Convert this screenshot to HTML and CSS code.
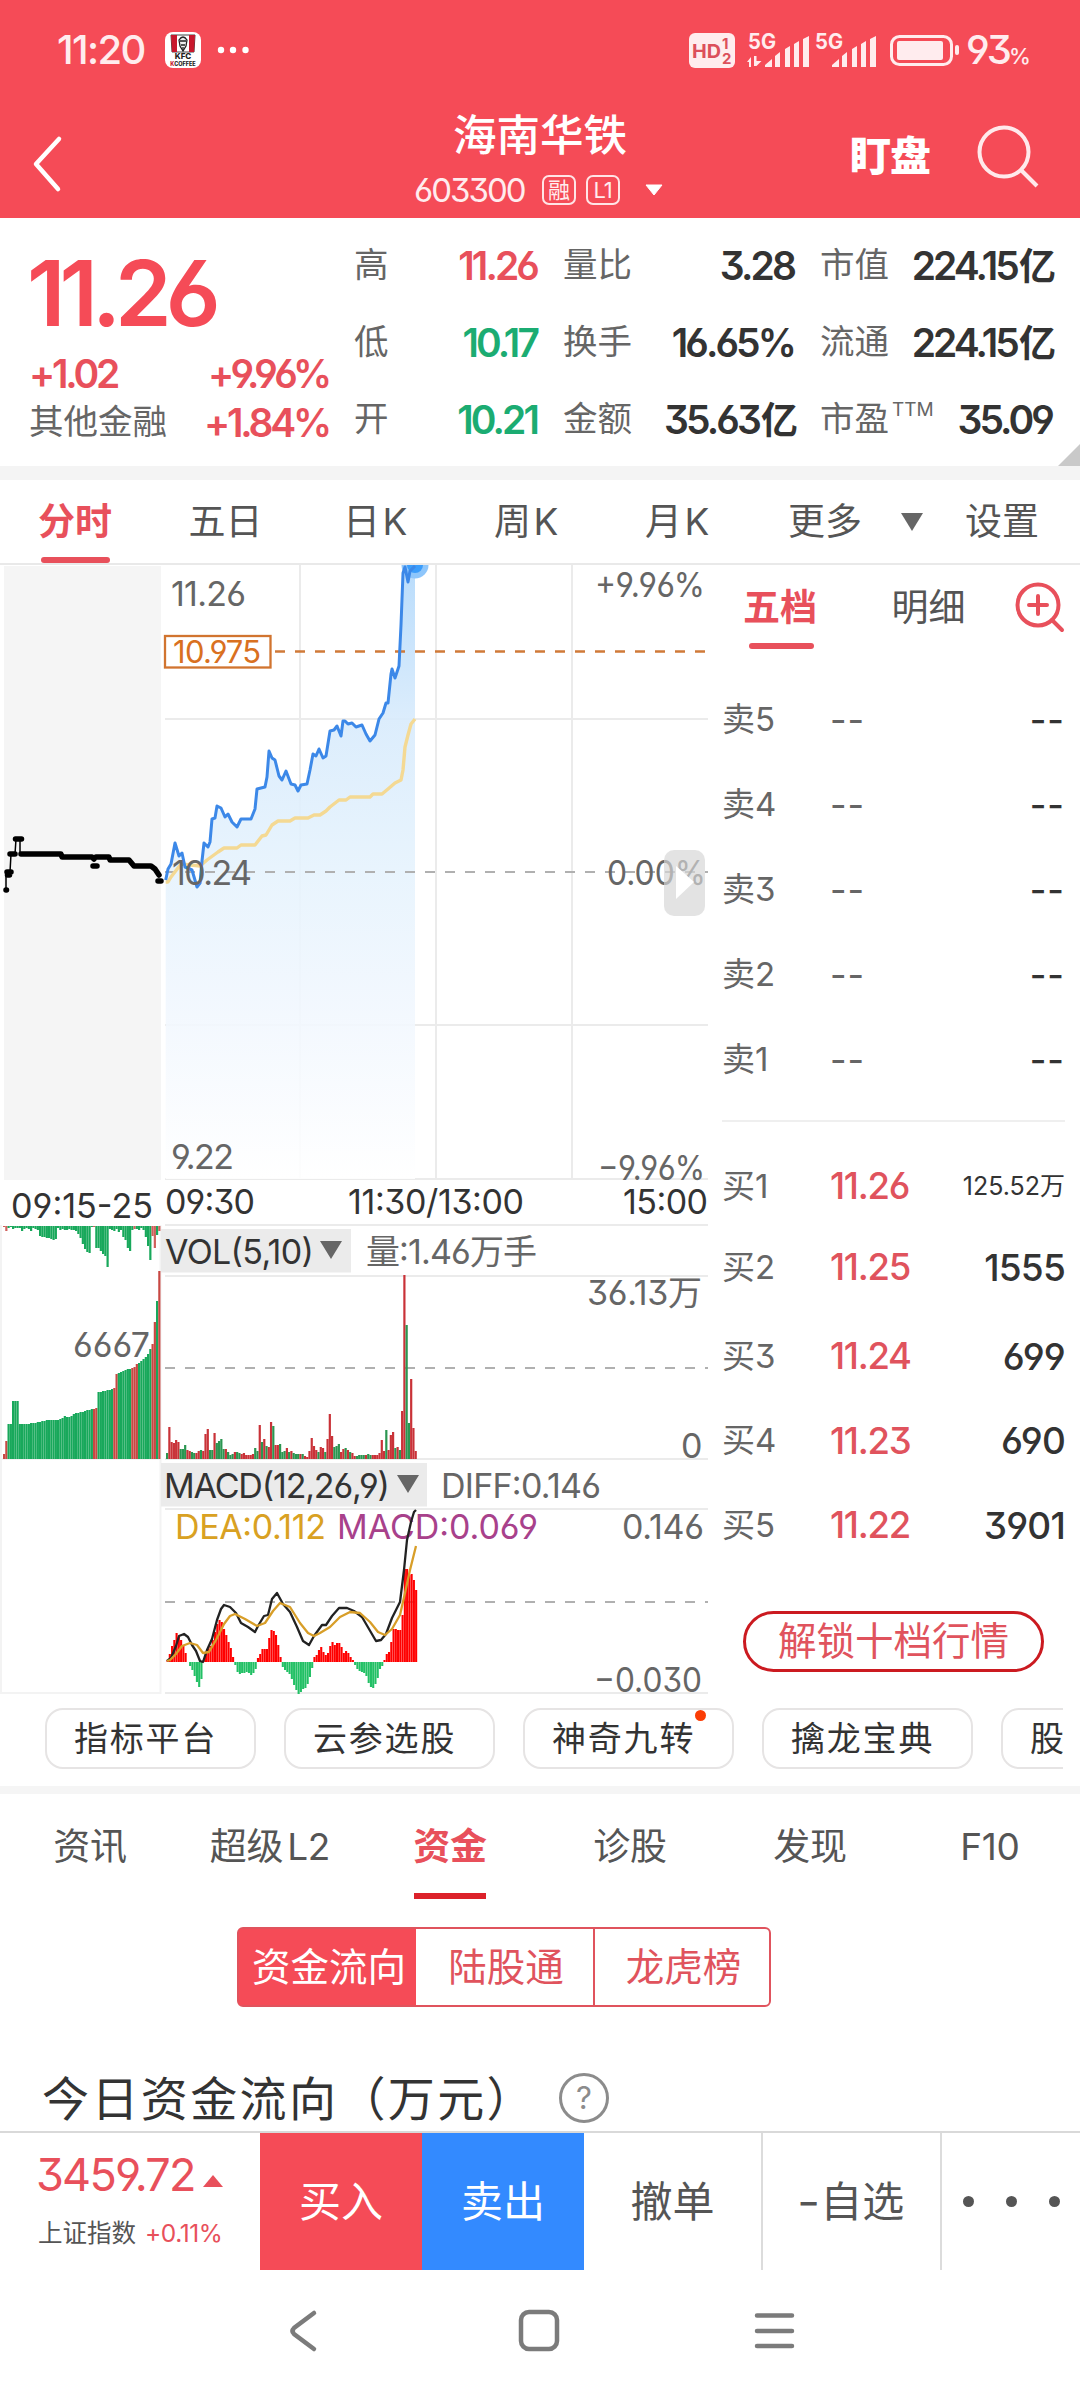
FILE: index.html
```html
<!DOCTYPE html>
<html lang="zh-CN">
<head>
  <meta charset="utf-8">
  <title>海南华铁 603300</title>
  <meta name="viewport" content="width=device-width, initial-scale=1">
  <link rel="stylesheet" href="styles.css">
</head>
<body>
  <header class="header">
    <div class="status">
      <span class="clock">11:20</span>
      <svg class="app-icon" width="36" height="36" viewBox="0 0 36 36">
        <rect width="36" height="36" rx="8" fill="#fff"/>
        <path d="M6 3h24l-1 17H7z" fill="#fff" stroke="#444" stroke-width="1"/>
        <path d="M6 3h6v17H7zM24 3h6l-1 17h-5z" fill="#c8172c"/>
        <path d="M14 8q4-6 8 0l-1 6-3 5-3-5z" fill="#eee" stroke="#222" stroke-width="1.3"/>
        <path d="M15 9h6M16 13h4M18 15v4" stroke="#222" stroke-width="1.3"/>
        <text x="18" y="27" class="kfc" font-size="8">KFC</text>
        <text x="18" y="33.500" class="kfc" font-size="5.500"><tspan fill="#c8172c">K</tspan>COFFEE</text>
      </svg>
      <svg class="more" width="34" height="8" viewBox="0 0 34 8" fill="#fff"><circle cx="4" cy="4" r="3.200"/><circle cx="16" cy="4" r="3.200"/><circle cx="28.500" cy="4" r="3.200"/></svg>
      <svg class="phone" width="272" height="40" viewBox="688 30 272 40" fill="#ffecee">
        <rect x="689" y="33" width="46" height="35" rx="6"/>
        <g class="hd" fill="#dc4f5b"><text x="692" y="58" font-size="19" textLength="29" lengthAdjust="spacingAndGlyphs">HD</text><text x="722" y="49" font-size="15">1</text><text x="722" y="64" font-size="15">2</text></g>
        <text class="hd" x="748" y="49" font-size="21" textLength="28" lengthAdjust="spacingAndGlyphs">5G</text>
        <text class="hd" x="815" y="49" font-size="21" textLength="28" lengthAdjust="spacingAndGlyphs">5G</text>
        <path d="M747 62l4-5v10h-2v-5zM754 56h2.500v5h5l-5 5h-2.500zM765 65l7-6v8h-7zM775 56l5-4v15h-5zM785 49l5-3v21h-5zM794 44l5-3v26h-5zM803 39l6-3v31h-6z"/>
        <path d="M832 65l7-6v8h-7zM842 56l5-4v15h-5zM852 49l5-3v21h-5zM861 44l5-3v26h-5zM870 39l6-3v31h-6z"/>
        <rect x="891.500" y="36.500" width="60" height="28" rx="8" fill="none" stroke="#ffecee" stroke-width="3"/>
        <rect x="897" y="41" width="46" height="19" rx="2"/>
        <rect x="955" y="45" width="4" height="10" rx="2"/>
      </svg>
      <span class="percent">93<small>%</small></span>
    </div>
    <div class="titlebar">
      <svg class="back" width="40" height="60" viewBox="0 0 40 60"><path d="M31 5 8 30l22 25" fill="none" stroke="#fff" stroke-width="4.500" stroke-linecap="round" stroke-linejoin="round"/></svg>
      <div class="stock">
        <h1>海南华铁</h1>
        <div class="code">603300 <span class="badge">融</span><span class="badge">L1</span><svg width="18" height="12" viewBox="0 0 18 12"><path d="M1 1h16L9 11z" fill="#fff" stroke="#fff" stroke-linejoin="round"/></svg></div>
      </div>
      <span class="watch">盯盘</span>
      <svg class="search" width="64" height="64" viewBox="0 0 64 64" fill="none" stroke="#ffe9eb" stroke-width="4"><circle cx="28" cy="27" r="24.500"/><path d="M44 44l17 17"/></svg>
    </div>
  </header>

  <section class="quote">
    <div class="price">
      <div class="now">11.26</div>
      <div class="pair chg"><b>+1.02</b><b>+9.96%</b></div>
      <div class="pair sector"><span>其他金融</span><b>+1.84%</b></div>
    </div>
    <dl class="stats c1">
      <div><dt>高</dt><dd class="up">11.26</dd></div>
      <div><dt>低</dt><dd class="down">10.17</dd></div>
      <div><dt>开</dt><dd class="down">10.21</dd></div>
    </dl>
    <dl class="stats c2">
      <div><dt>量比</dt><dd>3.28</dd></div>
      <div><dt>换手</dt><dd>16.65%</dd></div>
      <div><dt>金额</dt><dd>35.63<i>亿</i></dd></div>
    </dl>
    <dl class="stats c3">
      <div><dt>市值</dt><dd>224.15<i>亿</i></dd></div>
      <div><dt>流通</dt><dd>224.15<i>亿</i></dd></div>
      <div><dt>市盈<sup>TTM</sup></dt><dd>35.09</dd></div>
    </dl>
    <i class="corner"></i>
  </section>

  <nav class="periods">
    <span class="active">分时</span><span>五日</span><span class="k">日K</span><span class="k">周K</span><span class="k">月K</span><span class="wide">更多<svg width="22" height="18" viewBox="0 0 22 18"><path d="M0 0h22L11 18z" fill="#666"/></svg></span><span class="wide">设置</span>
  </nav>

  <main class="market">
    <svg class="chart" width="710" height="1135" viewBox="0 565 710 1135">
      <defs>
        <linearGradient id="fill" x1="0" y1="565" x2="0" y2="1179" gradientUnits="userSpaceOnUse">
          <stop offset="0" stop-color="#b1d8fb"/><stop offset=".25" stop-color="#d8ebfc"/><stop offset=".5" stop-color="#e6f3fd"/><stop offset=".72" stop-color="#f1f7fe"/><stop offset="1" stop-color="#fff"/>
        </linearGradient>
      </defs>
      <rect x="4" y="566" width="157" height="614" fill="#f5f5f5"/>
      <g stroke="#ebebeb" stroke-width="2">
        <path d="M165 719H708M165 1025H708M165 1179H708M165 1225H708M165 1276H708M165 1459H708M165 1509H708M165 1693H708M300 565V1179M436 565V1179M572 565V1179"/>
        <path d="M1 1225V1693H160.500V1225M0 1459H160" stroke="#f3f3f3" fill="none"/>
      </g>
      <path id="area" fill="url(#fill)" fill-opacity=".9"/>
      <g stroke="#b0b0b0" stroke-width="2.200" stroke-dasharray="10 10"><path d="M165 872H708M165 1368H708M165 1602H708"/></g>
      <path d="M275 651.500H706" stroke="#d07a38" stroke-width="2.500" stroke-dasharray="10 10"/>
      <circle cx="415" cy="565" r="13.500" fill="#8ec6fb"/>
      <circle cx="415" cy="565" r="8" fill="#3b9dfb"/>
      <path id="avg" fill="none" stroke="#f4d993" stroke-width="3.400" stroke-linejoin="round"/>
      <path id="line" fill="none" stroke="#3c88e8" stroke-width="3" stroke-linejoin="round"/>
      <g fill="none" stroke="#000" stroke-linecap="round" stroke-linejoin="round">
        <path d="M6 890V873L10 872 11 854H15L16 839H20V854" stroke-width="1.500"/>
        <path d="M6 890h.5M7 872H11M7.500 875h2M10 854H15M15.500 839H21.500M21 854H61L62 857H92L94 859M93 866H97M96 857H109L110 860H129L134 866H151L155 869 159 875M158 881H161" stroke-width="5.500"/>
      </g>

      <g id="auction"></g>
      <g id="volume"></g>
      <rect x="161" y="1229" width="190" height="43.500" fill="#ebebeb"/>
      <rect x="161" y="1463" width="266" height="43.500" fill="#ebebeb"/>
      <path d="M320 1241h22l-11 18zM397 1475h22l-11 18z" fill="#666"/>

      <rect x="165" y="636" width="105.500" height="31.500" fill="#fff" stroke="#d1742f" stroke-width="2.300"/>
      <g class="axis">
        <text x="171" y="606" textLength="75">11.26</text>
        <text x="173" y="663" textLength="88" class="cost">10.975</text>
        <text x="172" y="885" textLength="80">10.24</text>
        <text x="171" y="1169" textLength="63">9.22</text>
        <text x="595" y="597" textLength="110" lengthAdjust="spacingAndGlyphs">+9.96%</text>
        <text x="607" y="885" textLength="99" lengthAdjust="spacingAndGlyphs">0.00%</text>
        <text x="598" y="1180" textLength="107" lengthAdjust="spacingAndGlyphs">−9.96%</text>
        <text x="73" y="1357" textLength="77" lengthAdjust="spacingAndGlyphs">6667</text>
        <text x="366" y="1264" textLength="171">量:1.46万手</text>
        <text x="587" y="1305" textLength="115">36.13万</text>
        <text x="681" y="1458">0</text>
        <text x="441" y="1498" textLength="160">DIFF:0.146</text>
        <text x="622" y="1539" textLength="82">0.146</text>
        <text x="594" y="1692" textLength="108" lengthAdjust="spacingAndGlyphs">−0.030</text>
      </g>
      <g class="axis dark">
        <text x="11" y="1218" textLength="142" lengthAdjust="spacingAndGlyphs">09:15-25</text>
        <text x="165" y="1214" textLength="90">09:30</text>
        <text x="348" y="1214" textLength="176">11:30/13:00</text>
        <text x="623" y="1214" textLength="85">15:00</text>
        <text x="165" y="1264" textLength="149">VOL(5,10)</text>
        <text x="164" y="1498" textLength="226">MACD(12,26,9)</text>
      </g>
      <g class="axis">
        <text x="175" y="1539" textLength="151" class="dea">DEA:0.112</text>
        <text x="337" y="1539" textLength="201" class="macd">MACD:0.069</text>
      </g>
      <g id="macd"></g>
      <path id="diff" fill="none" stroke="#222" stroke-width="2.300" stroke-linejoin="round"/>
      <path id="dea" fill="none" stroke="#d89e28" stroke-width="2.300" stroke-linejoin="round"/>
      <rect x="664" y="850" width="41" height="66" rx="10" fill="#d6d6d6" fill-opacity=".68"/>
      <path d="M676 866v33l18-17z" fill="#fff"/>
    </svg>

    <aside class="book">
      <div class="book-tabs">
        <span class="active">五档</span><span>明细</span>
        <svg width="52" height="52" viewBox="0 0 52 52" fill="none" stroke="#e8505b" stroke-width="4"><circle cx="25" cy="24" r="20.500"/><path d="M16 24h18M25 15v18M39 39l10 10" stroke-linecap="round"/></svg>
      </div>
      <ul class="asks">
        <li>卖5<span>--</span><b>--</b></li>
        <li>卖4<span>--</span><b>--</b></li>
        <li>卖3<span>--</span><b>--</b></li>
        <li>卖2<span>--</span><b>--</b></li>
        <li>卖1<span>--</span><b>--</b></li>
      </ul>
      <ul class="bids">
        <li class="first">买1<span>11.26</span><b class="small">125.52万</b></li>
        <li class="second">买2<span>11.25</span><b>1555</b></li>
        <li>买3<span>11.24</span><b>699</b></li>
        <li>买4<span>11.23</span><b>690</b></li>
        <li>买5<span>11.22</span><b>3901</b></li>
      </ul>
      <a class="unlock">解锁十档行情</a>
    </aside>
  </main>

  <div class="pills">
    <span>指标平台</span><span>云参选股</span><span class="dot">神奇九转</span><span>擒龙宝典</span><span>股</span>
  </div>

  <nav class="sections">
    <span>资讯</span><span>超级<i>L2</i></span><span class="active">资金</span><span>诊股</span><span>发现</span><span>F10</span>
  </nav>
  <div class="segments"><span class="active">资金流向</span><span>陆股通</span><span>龙虎榜</span></div>
  <div class="flow-title"><h2>今日资金流向（万元）</h2><span class="help">?</span></div>

  <footer class="trade">
    <div class="index">
      <div class="points">3459.72<svg width="20" height="12" viewBox="0 0 20 12"><path d="M0 12 10 0l10 12z" fill="#e8505b"/></svg></div>
      <div class="index-name">上证指数 <em>+0.11%</em></div>
    </div>
    <span class="buy">买入</span><span class="sell">卖出</span><span class="act">撤单</span><span class="act"><i class="minus">-</i>自选</span>
    <span class="dots"><i></i><i></i><i></i></span>
  </footer>
  <div class="sysnav">
    <svg width="1080" height="60" viewBox="0 2300 1080 60" fill="none" stroke="#7b7b7b" stroke-width="4.500" stroke-linecap="round">
      <path d="M314 2313 294 2328q-3 3 0 6l20 15"/>
      <rect x="521" y="2312" width="36" height="37" rx="8"/>
      <path d="M757 2315.500h35M757 2331h35M757 2346h35"/>
    </svg>
  </div>
  <script src="chart.js"></script>
</body>
</html>
```

FILE: styles.css
```css
* {
  box-sizing: border-box;
}

body {
  margin: 0;
  width: 1080px;
  height: 2400px;
  overflow: hidden;
  background: #fff;
  color: #333;
  font-family: Inter, "Noto Sans CJK SC", sans-serif;
  font-feature-settings: "cv03", "cv04", "cv09";
  line-height: 1;
}

h1, h2, dl, dd, ul {
  margin: 0;
  padding: 0;
  font-weight: normal;
}

svg {
  display: block;
  flex: none;
}

b {
  font-weight: 600;
}

i {
  font-style: normal;
}

/* header */
.header {
  height: 218px;
  background: #f54b57;
  color: #fff;
}

.status {
  display: flex;
  align-items: center;
  height: 100px;
  padding-left: 57px;
  color: #ffecee;
}

.clock {
  width: 108px;
  font-size: 40px;
  font-weight: 500;
  letter-spacing: -1.6px;
}

.kfc {
  font-weight: 800;
  text-anchor: middle;
  fill: #222;
}

.more {
  margin-left: 16px;
}

.phone {
  margin-left: 437px;
}

.hd {
  font-weight: 700;
}

.percent {
  margin-left: 6px;
  font-size: 40px;
  font-weight: 500;
  letter-spacing: -3px;
}

.percent small {
  font-size: 22px;
}

.titlebar {
  display: flex;
  height: 118px;
}

.back {
  margin: 34px 0 0 28px;
}

.stock {
  width: 390px;
  margin-left: 277px;
  padding-top: 12px;
  text-align: center;
}

h1 {
  width: 390px;
  height: 46px;
  line-height: 46px;
  font-size: 43.5px;
  font-weight: 500;
}

.watch {
  margin: 36px 0 0 115px;
  font-size: 41px;
  font-weight: 800;
  letter-spacing: -1px;
}

.code {
  display: flex;
  align-items: center;
  height: 30px;
  margin: 17px 0 0 69px;
  font-size: 33px;
  letter-spacing: -2px;
  color: #ffecee;
}

.badge {
  width: 34px;
  height: 30px;
  margin-left: 10px;
  border: 2px solid #ffe4e6;
  border-radius: 7px;
  font-size: 22px;
  line-height: 27px;
  letter-spacing: -1px;
}

.code .badge:first-of-type {
  margin-left: 17px;
}

.code svg {
  margin-left: 25px;
}

.search {
  margin: 25px 0 0 46px;
}

/* quote */
.quote {
  position: relative;
  display: flex;
  height: 262px;
  border-bottom: 14px solid #f4f4f4;
}

.price {
  width: 329px;
  padding-left: 29px;
  color: #e8505b;
}

.now {
  height: 66px;
  margin: 42px 0 0 -2px;
  line-height: 66px;
  font-size: 91px;
  font-weight: 600;
  letter-spacing: -6px;
  color: #f54b57;
}

.pair {
  display: flex;
  justify-content: space-between;
  align-items: center;
  height: 49px;
  font-size: 39px;
  letter-spacing: -3.2px;
}

.chg {
  margin-top: 23px;
}

.sector span {
  font-size: 34.5px;
  letter-spacing: 0;
  color: #666;
}

.stats {
  padding-top: 9px;
}

.stats div {
  display: flex;
  justify-content: space-between;
  align-items: center;
  height: 77px;
}

.stats dt {
  position: relative;
  font-size: 34.5px;
  color: #666;
}

.stats dd {
  font-size: 39px;
  font-weight: 600;
  letter-spacing: -2.9px;
  white-space: nowrap;
}

.stats dd i {
  margin: 0 -1px 0 2px;
  font-size: 37px;
}

.stats sup {
  position: absolute;
  left: 72px;
  top: -2px;
  font-size: 19px;
  line-height: 1;
}

.c1 {
  width: 183px;
  margin-left: 25px;
}

.c2 {
  width: 231px;
  margin-left: 26px;
}

.c3 {
  width: 232px;
  margin-left: 26px;
}

.up {
  color: #e8505b;
}

.down {
  color: #1bac72;
}

.corner {
  position: absolute;
  right: 0;
  bottom: 0;
  border-left: 22px solid transparent;
  border-bottom: 22px solid #c9c9c9;
}

/* chart period tabs */
.periods {
  display: flex;
  height: 85px;
  border-bottom: 2px solid #e9e9e9;
  font-size: 37px;
  color: #555;
}

.periods span {
  position: relative;
  display: flex;
  align-items: center;
  justify-content: center;
  width: 151px;
}

.periods .k {
  letter-spacing: 2.5px;
}

.periods .active {
  font-weight: 600;
  color: #e8505b;
}

.periods span:first-child {
  width: 150px;
}

.periods .active::after {
  content: "";
  position: absolute;
  left: 41px;
  bottom: 0;
  width: 69px;
  height: 6px;
  border-radius: 3px;
  background: #e8505b;
}

.periods .wide {
  width: auto;
  margin-left: 34px;
}

.periods .wide:last-child {
  margin-left: 42px;
}

.periods svg {
  margin-left: 39px;
}

/* chart + order book */
.market {
  display: flex;
  height: 1135px;
}

.axis {
  font-size: 34px;
  fill: #666;
}

.dark {
  fill: #333;
}

.axis .cost {
  font-size: 31px;
  fill: #d97020;
}

.axis .dea {
  fill: #d9a122;
}

.axis .macd {
  fill: #a8418b;
}

.book {
  width: 370px;
  padding: 0 15px 0 12px;
}

.book-tabs {
  display: flex;
  align-items: center;
  height: 84px;
  padding-left: 21px;
  font-size: 37px;
  color: #555;
}

.book-tabs span {
  position: relative;
  width: 149px;
}

.book-tabs .active {
  font-weight: 600;
  color: #e8505b;
}

.book-tabs .active::after {
  content: "";
  position: absolute;
  left: 6px;
  bottom: -23px;
  width: 65px;
  height: 6px;
  border-radius: 3px;
  background: #e8505b;
}

.book-tabs span + span {
  width: 122px;
}

.book ul {
  list-style: none;
}

.book li {
  display: flex;
  align-items: center;
  height: 85px;
  font-size: 33px;
  color: #666;
}

.asks {
  height: 473px;
  padding-top: 28px;
  border-bottom: 2px solid #efefef;
}

.asks span, .bids span {
  width: 121px;
  margin-left: auto;
}

.asks span, .asks b {
  font-size: 36px;
  letter-spacing: 1px;
}

.asks li b, .bids li b {
  width: 114px;
  font-weight: 500;
  text-align: right;
  color: #333;
}

.bids {
  padding-top: 25px;
}

.book .bids li {
  height: 84.5px;
}

.book .bids .first {
  height: 78px;
}

.book .bids .second {
  height: 89px;
  padding-bottom: 5px;
}

.bids span {
  font-size: 36.5px;
  font-weight: 500;
  letter-spacing: -1.3px;
  color: #e0535d;
}

.bids li b {
  font-size: 37px;
  letter-spacing: -.8px;
}

.book .bids .small {
  font-size: 25px;
  font-weight: 400;
  letter-spacing: 0;
  white-space: nowrap;
}

.unlock {
  display: block;
  width: 301px;
  height: 61px;
  margin: 43px 0 0 21px;
  border: 3px solid #cb1a20;
  border-radius: 31px;
  font-size: 38.5px;
  line-height: 55px;
  text-align: center;
  color: #e0535d;
}

/* indicator shortcuts */
.pills {
  display: flex;
  gap: 28px;
  width: 1063px;
  height: 94px;
  padding: 8px 0 0 45px;
  overflow: hidden;
}

.pills span {
  position: relative;
  flex: none;
  width: 211px;
  height: 61px;
  padding-left: 27px;
  border: 2.5px solid #e6e4e4;
  border-radius: 18px;
  font-size: 34px;
  line-height: 57px;
  letter-spacing: 1.8px;
}

.pills .dot::after {
  content: "";
  position: absolute;
  right: 26px;
  top: 0;
  width: 11px;
  height: 11px;
  border-radius: 50%;
  background: #fb3d05;
}

/* info tabs */
.sections {
  display: flex;
  height: 108px;
  margin-top: -8px;
  border-top: 8px solid #f5f5f5;
  font-size: 37px;
  color: #555;
}

.sections span {
  position: relative;
  width: 180px;
  line-height: 105px;
  letter-spacing: -.3px;
  text-align: center;
}

.sections i {
  margin-left: 4px;
}

.sections .active {
  font-weight: 700;
  color: #e8505b;
}

.sections .active::after {
  content: "";
  position: absolute;
  left: 54px;
  top: 99px;
  width: 72px;
  height: 6px;
  background: #dc222a;
}

.segments {
  display: flex;
  width: 534px;
  height: 80px;
  margin: 33px 0 0 237px;
  border: 2px solid #e0535d;
  border-radius: 6px;
  font-size: 38.5px;
  line-height: 77px;
  text-align: center;
  color: #e0535d;
}

.segments span {
  flex: none;
  width: 177px;
  padding-left: 3px;
}

.segments span + span + span {
  width: 176px;
  border-left: 2px solid #e0535d;
}

.segments .active {
  background: #f54b57;
  color: #fff;
}

.flow-title {
  display: flex;
  align-items: center;
  height: 98px;
  margin-top: 42px;
  padding-left: 42px;
}

h2 {
  width: 517px;
  font-size: 47px;
  letter-spacing: 2.4px;
  white-space: nowrap;
}

.help {
  width: 50px;
  height: 50px;
  border: 3px solid #8c8c8c;
  border-radius: 50%;
  font-size: 31px;
  line-height: 44px;
  text-align: center;
  color: #8c8c8c;
}

/* trade bar */
.trade {
  position: relative;
  display: flex;
  height: 139px;
  margin-top: -16px;
  border-top: 2px solid #d9d9d9;
  background: #fff;
  font-size: 42px;
  line-height: 138px;
  text-align: center;
  color: #555;
}

.index {
  width: 260px;
  padding-left: 36px;
  text-align: left;
  line-height: 1;
}

.points {
  display: flex;
  align-items: center;
  height: 40px;
  margin-top: 21px;
  font-size: 45px;
  letter-spacing: -1.8px;
  color: #e8505b;
}

.points svg {
  margin: 14px 0 0 8px;
}

.index-name {
  margin: 27px 0 0 2px;
  font-size: 24.5px;
}

.index-name em {
  margin-left: 2px;
  font-style: normal;
  letter-spacing: -.4px;
  color: #e8505b;
}

.buy, .sell {
  width: 162px;
  color: #fff;
}

.buy {
  background: #f54b57;
}

.sell {
  background: #338aff;
}

.act {
  width: 179px;
  border-right: 2px solid #dcdcdc;
}

.minus {
  display: inline-block;
  margin-right: 2px;
  transform: scaleX(1.2);
}

.dots {
  display: flex;
  align-items: center;
  gap: 32px;
  padding-left: 21px;
}

.dots i {
  width: 11px;
  height: 11px;
  border-radius: 50%;
  background: #555;
}

.sysnav {
  padding-top: 30px;
}
```

FILE: chart.js
```js
var priceLine = [[165.7,880],[168,869],[171,864],[175,843],[179,856],[182,853],[185,867],[192,870],[197,887],[200,883],[202,861],[204,843],[208,847],[210,842],[212,819],[215,818],[217,806],[221,808],[225,817],[228,814],[232,822],[237,827],[241,819],[251,819],[255,809],[257,789],[265,787],[267,777],[269,751],[272,758],[275,760],[279,776],[282,780],[286,771],[291,784],[295,785],[298,791],[301,785],[307,784],[310,770],[313,754],[316,756],[319,749],[323,758],[326,756],[330,731],[334,730],[337,726],[341,736],[343,721],[345,721],[348,724],[352,723],[356,727],[362,725],[366,734],[370,741],[375,735],[379,719],[383,713],[386,703],[388,703],[391,674],[392,669],[395,678],[399,666],[401,625],[403,573],[405,567],[408,582],[410,571],[415,566]];
var avgLine = [[165.7,882],[168,882],[171,877],[181,864],[200,866],[207,860],[218,852],[224,848],[237,848],[241,845],[255,845],[262,836],[266,835],[272,825],[278,821],[290,821],[295,818],[308,818],[314,815],[320,815],[326,811],[330,807],[339,800],[346,800],[350,797],[370,797],[373,794],[382,794],[388,789],[395,783],[401,780],[403,770],[405,747],[408,735],[411,724],[415,719]];
var diffLine = [[167,1661],[171,1658],[176,1646],[179,1636],[184,1634],[188,1637],[192,1645],[196,1651],[200,1661],[203,1662],[207,1650],[212,1639],[217,1620],[221,1609],[224,1605],[230,1607],[236,1613],[241,1623],[248,1627],[255,1632],[258,1626],[264,1616],[268,1615],[272,1599],[277,1593],[283,1604],[290,1612],[297,1627],[303,1641],[309,1645],[314,1636],[322,1625],[326,1625],[332,1616],[339,1608],[347,1608],[354,1611],[362,1617],[369,1629],[376,1641],[381,1640],[386,1634],[392,1618],[400,1602],[404,1570],[407,1540],[411,1522],[414,1512],[416,1510]];
var deaLine = [[167,1661],[170,1660],[176,1654],[182,1646],[190,1643],[197,1645],[203,1653],[209,1652],[216,1640],[224,1624],[230,1616],[235,1614],[245,1619],[257,1626],[265,1623],[273,1611],[280,1603],[290,1607],[300,1623],[308,1633],[314,1636],[320,1633],[330,1627],[340,1617],[350,1612],[360,1613],[370,1622],[378,1632],[385,1635],[392,1629],[400,1615],[405,1593],[410,1570],[416,1546]];

// one value per minute, 09:30 - 11:20
var vol = [6,32,17,16,19,17,10,10,14,9,8,7,6,6,8,9,8,25,30,9,9,26,16,18,20,10,10,7,4,5,7,7,6,5,6,4,4,4,5,11,8,34,17,20,13,12,37,33,14,14,15,7,8,11,7,8,6,5,5,5,5,3,2,8,21,13,9,7,12,11,7,20,45,23,12,13,15,7,10,11,9,7,6,3,3,4,4,4,4,5,4,4,4,4,6,19,8,29,9,24,27,11,12,9,48,184,134,36,80,31,8];
var volColor = "grrrrrgggrrggrrgrrrggrggggrgggrggrrrrrrggrgrgrrgrrgggrgrgggrgrrrrrrgrrgrrrgggrrgrgrrggggrggrrrrrrgrrrgrgrrggrrr";
var macd = [2,8,16,22,29,25,22,16,9,0,-4,-8,-14,-20,-25,-17,2,9,13,16,22,30,38,42,40,33,27,20,14,5,-3,-10,-12,-11,-11,-10,-11,-13,-11,-7,4,8,13,13,13,24,32,31,27,17,5,-5,-8,-10,-12,-17,-23,-28,-32,-30,-27,-26,-22,-15,-6,5,7,12,15,10,7,9,16,20,17,19,19,15,9,11,9,5,2,-3,-7,-9,-10,-11,-14,-21,-25,-26,-22,-16,-7,-4,2,8,10,20,33,33,32,32,47,93,93,87,88,82,72];
// call auction: matched volume (bottom) and unmatched (top)
var matched = [5,18,35,35,58,58,58,35,35,35,35,35,36,36,36,37,37,38,38,39,39,39,39,39,39,40,41,43,42,42,43,45,46,46,47,47,48,49,49,50,50,51,67,67,68,68,69,69,70,71,85,86,87,88,89,90,90,91,92,95,96,98,100,102,105,110,115,137,158,188];
var unmatched = [1,5,2,1,3,2,2,2,5,3,2,3,5,2,3,4,10,11,11,12,12,13,14,13,2,4,3,4,4,3,4,4,5,8,12,18,23,26,27,1,1,22,22,25,28,30,41,3,4,5,3,6,4,11,14,22,25,4,3,3,4,2,4,11,20,34,10,22,9,5];
var matchedRed = [0,1,40,41,49,50,57,58,59,66,67,69];
var unmatchedRed = [0,1,40,58,66,67,69];

function path(p) {
  return "M" + p.map(function(q) { return q.join(" "); }).join("L");
}

function bar(x, y, w, h, color) {
  return '<rect x="' + x.toFixed(2) + '" y="' + y + '" width="' + w + '" height="' + h + '" fill="' + color + '"/>';
}

function set(id, d) {
  document.getElementById(id).setAttribute("d", d);
}

set("line", path(priceLine));
set("area", path(priceLine) + "V1179H165.7Z");
set("avg", path(avgLine));
set("diff", path(diffLine));
set("dea", path(deaLine));

var v = "", m = "", a = "";
vol.forEach(function(h, i) {
  v += bar(166 + i * 2.26, 1459 - h, 2.2, h, volColor[i] == "g" ? "#2b9651" : "#c93238");
});
macd.forEach(function(h, i) {
  m += bar(166.5 + i * 2.26, h > 0 ? 1662 - h : 1662, 2.1, Math.abs(h), h > 0 ? "#ff0000" : "#22c065");
});
matched.forEach(function(h, i) {
  a += bar(3 + i * 2.25, 1459 - h, 2.2, h, matchedRed.indexOf(i) >= 0 ? "#c84843" : "#18a85b");
});
unmatched.forEach(function(h, i) {
  a += bar(3 + i * 2.25, 1226, 2.2, h, unmatchedRed.indexOf(i) >= 0 ? "#d0605c" : "#18a85b");
});
document.getElementById("volume").innerHTML = v;
document.getElementById("macd").innerHTML = m;
document.getElementById("auction").innerHTML = a;
```
